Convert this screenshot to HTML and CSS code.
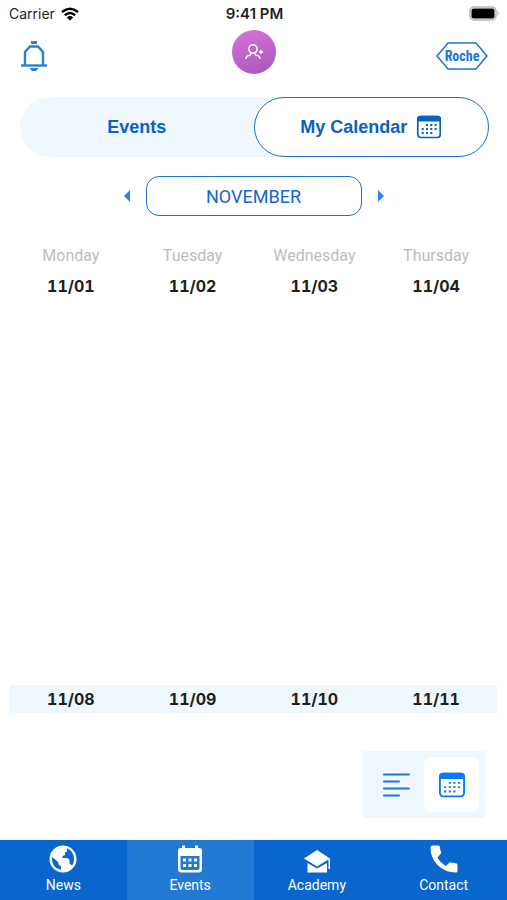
FILE: index.html
```html
<!DOCTYPE html>
<html lang="en">
  <head>
    <meta charset="utf-8" />
    <meta name="viewport" content="width=device-width, initial-scale=1.0" />
    <title>My Calendar</title>
    <link rel="stylesheet" href="styles.css">
  </head>

  <body>
    <!-- Status bar -->
    <div class="status-bar">
      <div class="carrier">
        <span>Carrier</span>
        <svg width="18" height="14" viewBox="0 0 18 14" fill="none" stroke="#000" stroke-width="2.5">
          <path d="M1 5Q9-1.6 17 5" />
          <path d="M3.8 8.2Q9 3.8 14.2 8.2" />
          <path d="M5.8 10.4Q9 7.8 12.2 10.4L9 13.6z" fill="#000" stroke="none" />
        </svg>
      </div>
      <span class="clock">9:41 PM</span>
      <svg class="battery" width="31" height="15" viewBox="0 0 31 15">
        <rect x="1" y="1" width="26" height="13" rx="4" fill="#fff" stroke="#b5b5b5" stroke-width="1.5" />
        <rect x="2.5" y="2.5" width="23" height="10" rx="2" fill="#000" />
        <path d="M28.5 5Q31 7.5 28.5 10z" fill="#b5b5b5" />
      </svg>
    </div>

    <!-- Header -->
    <header class="header">
      <button class="bell" aria-label="Notifications">
        <svg width="28" height="32" viewBox="0 0 28 32" fill="none" stroke="#2a80d2" stroke-width="2.4">
          <path d="M11 2.5h6" stroke-width="3" />
          <path d="M5 25V12L10 6.500h8L23 12v13" />
          <path d="M1 25.500h26" />
          <path d="M9.500 28h9L16 31h-4z" fill="#2a80d2" stroke="none" />
        </svg>
      </button>
      <button class="avatar" aria-label="Profile">
        <svg width="20" height="18" viewBox="0 0 20 18" fill="none" stroke="#fff" stroke-width="1.500">
          <circle cx="9" cy="6" r="4.200" />
          <path d="M2 16Q2 12.500 6 12.200L7.500 10M16 16Q16 12.500 12 12.200L10.500 10" />
          <path d="M17 7v4M15 9h4" />
        </svg>
      </button>
      <a class="logo" href="#" aria-label="Roche">
        <svg width="52" height="28" viewBox="0 0 52 28">
          <path d="M12 1h28l11 13-11 13H12L1 14z" fill="#fff" stroke="#1b74d1" stroke-width="1.500" />
          <text class="logo-text" x="26" y="19" text-anchor="middle">Roche</text>
        </svg>
      </a>
    </header>

    <main class="content">
      <nav class="tabs">
        <button class="tab">Events</button>
        <button class="tab active">
          <span>My Calendar</span>
          <svg width="26" height="24" viewBox="0 0 26 24">
            <use href="#calendar" />
          </svg>
        </button>
      </nav>

      <div class="month-picker">
        <button class="arrow" aria-label="Previous month">
          <svg width="6" height="12" viewBox="0 0 6 12"><path d="M6 0v12L0 6z" /></svg>
        </button>
        <button class="month">NOVEMBER</button>
        <button class="arrow" aria-label="Next month">
          <svg width="6" height="12" viewBox="0 0 6 12"><path d="M0 0v12l6-6z" /></svg>
        </button>
      </div>

      <table class="calendar">
        <thead>
          <tr>
            <th>Monday</th>
            <th>Tuesday</th>
            <th>Wednesday</th>
            <th>Thursday</th>
          </tr>
        </thead>
        <tbody>
          <tr class="dates">
            <td>11/01</td>
            <td>11/02</td>
            <td>11/03</td>
            <td>11/04</td>
          </tr>
          <tr class="slots">
            <td></td>
            <td></td>
            <td></td>
            <td></td>
          </tr>
          <tr class="dates shaded">
            <td>11/08</td>
            <td>11/09</td>
            <td>11/10</td>
            <td>11/11</td>
          </tr>
        </tbody>
      </table>

      <div class="view-switch">
        <button class="view-btn" aria-label="List view">
          <svg width="28" height="24" viewBox="0 0 28 24" stroke="#1677df" stroke-width="2" stroke-linecap="round">
            <path d="M1 1.500h25M1 8.500h15M1 15.500h25M1 22.500h15" />
          </svg>
        </button>
        <button class="view-btn selected" aria-label="Calendar view">
          <svg width="28" height="26" viewBox="0 0 26 24">
            <use href="#calendar" />
          </svg>
        </button>
      </div>
    </main>

    <!-- Bottom navigation -->
    <nav class="bottom-nav">
      <a href="#" class="nav-item">
        <svg width="28" height="28" viewBox="0 0 28 28">
          <circle cx="14" cy="14" r="13.500" fill="#fff" />
          <path d="M18 3.300Q25 6 25 14.500Q25 18 23 20.500L20.500 18.500V14.500L18 13H13.500V11L16 10V7.500L18 6.500z" fill="#0866cc" />
          <path d="M3.300 12l6.200 5.500v2l2.500 2v3.300Q3 23 3 14z" fill="#0866cc" />
        </svg>
        <span>News</span>
      </a>
      <a href="#" class="nav-item current">
        <svg width="28" height="28" viewBox="0 0 28 28">
          <path d="M6 .5h3V3h10V.5h3V3h1.500Q26 3 26 6v18q0 3.500-3.500 3.500h-17Q2 27.500 2 24V6q0-3 2.500-3H6z" fill="#fff" />
          <path d="M4.500 11h19v12q0 2-2 2h-15q-2 0-2-2z" fill="#2279d2" />
          <path d="M7 13.500h3v3H7zM12.500 13.500h3v3h-3zM18 13.500h3v3h-3zM7 19h3v3H7zM12.500 19h3v3h-3zM18 19h3v3h-3z" fill="#fff" />
        </svg>
        <span>Events</span>
      </a>
      <a href="#" class="nav-item">
        <svg width="28" height="28" viewBox="0 0 28 28" fill="#fff">
          <path d="M14 5l13 8.500-13 8L1 13.500z" />
          <path d="M4.500 18l9.500 5.500L24 18v9.500H4.500z" />
          <path d="M25.500 14h1.500v10h-1.500z" />
        </svg>
        <span>Academy</span>
      </a>
      <a href="#" class="nav-item">
        <svg width="28" height="28" viewBox="0 0 28 28" fill="#fff">
          <path d="M2.500.5h6Q10 .5 10 2q0 3 1 5 .5 1-.5 2L7.500 12.500Q10.500 18 16 21l3-3q1-1 2-.5 2.500.8 5 .8 1.500 0 1.500 1.700v6q0 1.500-1.500 1.500Q15 27.500 7.700 20.300.5 13 .5 2.500.5.5 2.500.5z" />
        </svg>
        <span>Contact</span>
      </a>
    </nav>

    <svg class="symbols" width="0" height="0" aria-hidden="true">
      <symbol id="calendar" viewBox="0 0 26 24">
        <rect x="1.800" y="1.500" width="22.400" height="21" rx="3" fill="#fff" stroke="currentColor" stroke-width="1.700" />
        <path d="M1 6.500V4q0-3.300 3.300-3.300h17.400Q25 .7 25 4v2.500z" fill="currentColor" />
        <path d="M10 10h2M14.300 10h2M18.600 10h2M5.700 14h2M10 14h2M14.300 14h2M18.600 14h2M5.700 18h2M10 18h2M14.300 18h2" stroke="currentColor" stroke-width="1.800" />
      </symbol>
    </svg>
  </body>
</html>
```

FILE: styles.css
```css
* {
  box-sizing: border-box;
}

body {
  margin: 0;
  min-height: 100vh;
  display: flex;
  flex-direction: column;
  background: #fff;
  font-family: Roboto, "Liberation Sans", sans-serif;
  color: #1f1f1f;
}

button {
  margin: 0;
  padding: 0;
  border: none;
  background: none;
  font-family: inherit;
  color: inherit;
  cursor: pointer;
}

svg {
  display: block;
}

.symbols {
  position: absolute;
}

/* Status bar */
.status-bar {
  display: grid;
  grid-template-columns: 1fr auto 1fr;
  align-items: center;
  height: 27px;
  padding: 0 7px 0 9px;
  font-family: Inter, sans-serif;
  font-size: 14px;
}

.carrier {
  display: flex;
  align-items: center;
  gap: 6px;
}

.clock {
  font-size: 15px;
  font-weight: 600;
}

.battery {
  justify-self: end;
}

/* Header */
.header {
  display: grid;
  grid-template-columns: 1fr auto 1fr;
  align-items: center;
  height: 57px;
  padding: 0 19px 0 20px;
}

.avatar {
  display: flex;
  align-items: center;
  justify-content: center;
  align-self: start;
  width: 44px;
  height: 44px;
  margin-top: 3px;
  border-radius: 50%;
  background: linear-gradient(160deg, #d973dc, #a457b8);
}

.bell {
  justify-self: start;
}

.logo {
  justify-self: end;
}

.logo-text {
  font-family: "Roboto Condensed", Roboto, sans-serif;
  font-size: 14px;
  font-weight: 700;
  fill: #1b74d1;
}

/* Tabs */
.content {
  padding: 13px 10px 0;
}

.tabs {
  display: flex;
  height: 60px;
  margin: 0 8px 0 10px;
  border-radius: 30px;
  background: #f0f8ff;
}

.tab {
  display: flex;
  flex: 1;
  align-items: center;
  justify-content: center;
  gap: 9px;
  border-radius: 30px;
  font-size: 18px;
  font-weight: 700;
  font-family: "Liberation Sans", sans-serif;
  color: #0862c4;
}

.tab.active {
  border: 1px solid #1b70cb;
  background: #fff;
}

/* Month */
.month-picker {
  display: flex;
  align-items: center;
  justify-content: center;
  gap: 16px;
  margin-top: 19px;
}

.month {
  width: 216px;
  height: 40px;
  border: 1px solid #1b70cb;
  border-radius: 13px;
  font-size: 18px;
  color: #1467c3;
}

.arrow {
  fill: #2f80f0;
}

/* Calendar */
.calendar {
  width: 100%;
  margin-top: 22px;
  border-collapse: collapse;
  table-layout: fixed;
  text-align: center;
}

.calendar th {
  height: 34px;
  padding: 0;
  font-size: 16px;
  font-weight: 400;
  color: #bcbcbc;
}

.calendar td {
  padding: 0;
}

.dates td {
  height: 28px;
  font-family: Inter, sans-serif;
  font-size: 16px;
  line-height: 20px;
  font-weight: 700;
  font-variant-numeric: tabular-nums;
}

.slots td {
  height: 385px;
}

.shaded {
  background: #f0f8ff;
}

/* List / calendar switch */
.view-switch {
  display: flex;
  width: 122px;
  margin: 38px 12px 22px auto;
  padding: 6px;
  background: #f0f8ff;
}

.view-btn {
  display: flex;
  flex: 1;
  align-items: center;
  justify-content: center;
  height: 55px;
  border-radius: 6px;
  color: #087af5;
}

.view-btn.selected {
  background: #fff;
}

/* Bottom navigation */
.bottom-nav {
  display: flex;
  margin-top: auto;
  background: #0866cc;
}

.nav-item {
  display: flex;
  flex: 1;
  flex-direction: column;
  align-items: center;
  gap: 3px;
  height: 60px;
  padding-top: 5px;
  font-size: 14px;
  line-height: 18px;
  color: #fff;
  text-decoration: none;
}

.nav-item.current {
  background: #2279d2;
}
```
